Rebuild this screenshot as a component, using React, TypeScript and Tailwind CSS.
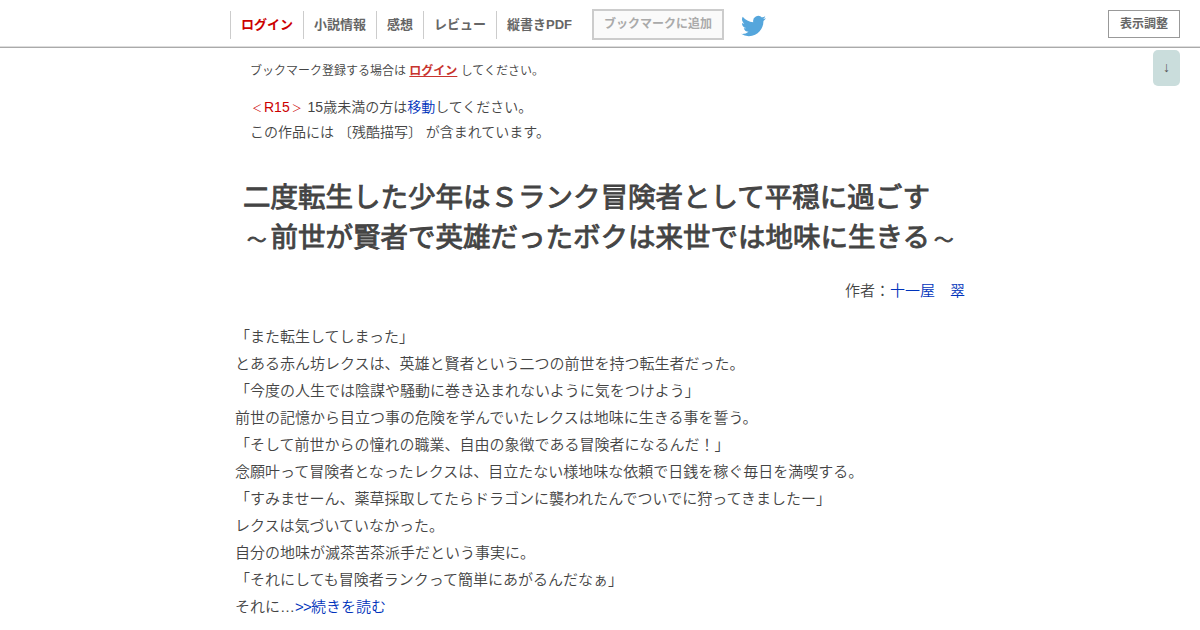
import React from 'react';

const NAV_ITEMS = [
  { label: 'ログイン', className: 'text-[#c00]' },
  { label: '小説情報', className: 'text-[#666]' },
  { label: '感想', className: 'text-[#666]' },
  { label: 'レビュー', className: 'text-[#666]' },
  { label: '縦書きPDF', className: 'text-[#666]' },
];

const SYNOPSIS = [
  '「また転生してしまった」',
  'とある赤ん坊レクスは、英雄と賢者という二つの前世を持つ転生者だった。',
  '「今度の人生では陰謀や騒動に巻き込まれないように気をつけよう」',
  '前世の記憶から目立つ事の危険を学んでいたレクスは地味に生きる事を誓う。',
  '「そして前世からの憧れの職業、自由の象徴である冒険者になるんだ！」',
  '念願叶って冒険者となったレクスは、目立たない様地味な依頼で日銭を稼ぐ毎日を満喫する。',
  '「すみませーん、薬草採取してたらドラゴンに襲われたんでついでに狩ってきましたー」',
  'レクスは気づいていなかった。',
  '自分の地味が滅茶苦茶派手だという事実に。',
  '「それにしても冒険者ランクって簡単にあがるんだなぁ」',
];

function TwitterBird({ className }: { className?: string }) {
  return (
    <svg viewBox="0 0 24 24" fill="currentColor" className={className}>
      <path d="M23.95 4.57a10 10 0 0 1-2.82.77 4.96 4.96 0 0 0 2.16-2.72c-.95.55-2 .95-3.13 1.18a4.92 4.92 0 0 0-8.38 4.48A13.93 13.93 0 0 1 1.64 3.16a4.92 4.92 0 0 0 1.52 6.57 4.9 4.9 0 0 1-2.23-.61v.06a4.92 4.92 0 0 0 3.95 4.83 5 5 0 0 1-2.21.08 4.94 4.94 0 0 0 4.6 3.42A9.87 9.87 0 0 1 0 19.54a13.99 13.99 0 0 0 7.55 2.21c9.05 0 14-7.5 14-13.98 0-.21 0-.42-.02-.63a9.94 9.94 0 0 0 2.46-2.55z" />
    </svg>
  );
}

function Header() {
  return (
    <header className="flex h-12 items-start border-b border-[#aaa] pl-[230px] pr-5 shadow-[inset_0_-1px_0_#ddd]">
      <nav className="mt-[11px] flex h-7 text-[13px] font-bold leading-[27px]">
        {NAV_ITEMS.map(item => (
          <a key={item.label} href="#" className={`border-l border-[#ccc] px-[10px] ${item.className}`}>
            {item.label}
          </a>
        ))}
      </nav>
      <span className="ml-[10px] mt-[9px] h-[31px] w-[132px] border-2 border-[#ccc] bg-[#fafafa] text-center text-[12px] font-bold leading-[27px] text-[#aaa]">
        ブックマークに追加
      </span>
      <TwitterBird className="ml-[17px] mt-[13px] h-[26px] w-[25px] text-[#55a6dc]" />
      <button className="ml-auto mt-[10px] h-7 w-[72px] border border-[#999] bg-white text-[12px] font-bold leading-[24px] text-[#666]">
        表示調整
      </button>
    </header>
  );
}

export default function App() {
  return (
    <div className="relative h-[630px] overflow-hidden whitespace-nowrap bg-white font-['Liberation_Sans','Noto_Sans_CJK_JP',sans-serif] text-[#444]">
      <Header />

      {/* Scroll to bottom */}
      <a href="#" className="absolute right-5 top-[50px] h-9 w-[27px] rounded-[5px] bg-[#cadddc] text-center font-['Liberation_Serif'] text-[14px] leading-9 text-[#555]">
        ↓
      </a>

      <main className="ml-[235px] w-[730px] font-[350]">
        {/* Notices */}
        <div className="pl-[15px]">
          <p className="pt-[13px] text-[12px] leading-5">
            ブックマーク登録する場合は <a href="#" className="font-bold text-[#c8342e] underline">ログイン</a> してください。
          </p>
          <p className="mt-[14px] text-[14px] leading-[25px]">
            <span className="text-[#c00]">
              <span className="px-[2px] text-[10px] leading-none">＜</span>R15<span className="px-[2px] text-[10px] leading-none">＞</span>
            </span>
            {' '}15歳未満の方は<a href="#" className="text-[#03b]">移動</a>してください。
            <br />
            この作品には 〔残酷描写〕 が含まれています。
          </p>
        </div>

        <h1 className="ml-2 mt-[33px] text-[27.5px] font-normal leading-10 [-webkit-text-stroke:0.9px_#444]">
          二度転生した少年はＳランク冒険者として平穏に過ごす
          <br />
          <span className="px-[4px] text-[19.5px] leading-none">～</span>前世が賢者で英雄だったボクは来世では地味に生きる<span className="px-[4px] text-[19.5px] leading-none">～</span>
        </h1>

        <p className="mt-[19px] text-right text-[15px] leading-[27px]">
          作者：<a href="#" className="text-[#03b]">十一屋　翠</a>
        </p>

        {/* Synopsis */}
        <div className="mt-[19px] text-[15px] leading-[27px]">
          {SYNOPSIS.map(line => (
            <p key={line}>{line}</p>
          ))}
          <p>
            それに…<a href="#" className="text-[#03b]"><span className="tracking-[-0.8px]">&gt;&gt;</span>続きを読む</a>
          </p>
        </div>
      </main>
    </div>
  );
}
